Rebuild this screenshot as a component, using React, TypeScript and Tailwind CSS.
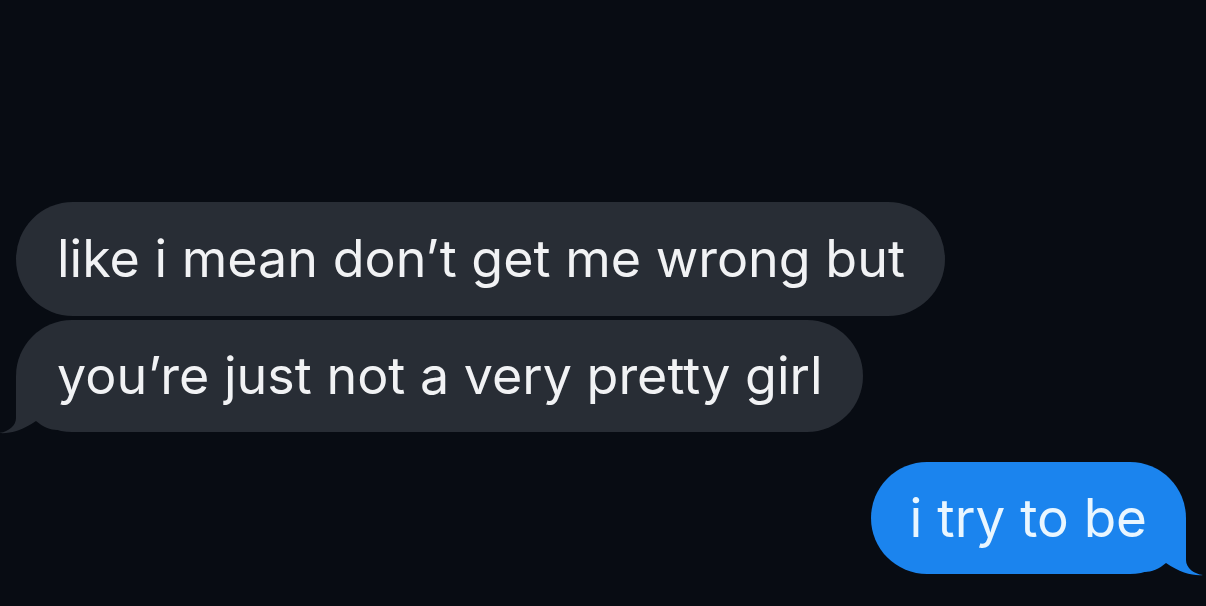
import React from 'react'

const font = { fontFamily: 'Inter, "Liberation Sans", Arial, sans-serif' }

// bubble tail, drawn relative to the bubble's bottom-right corner
function Tail({ color, side }: { color: string; side: 'left' | 'right' }) {
  const pos = side === 'right' ? '-right-[24px]' : '-left-[24px] -scale-x-100'
  return (
    <svg className={`absolute -bottom-[10px] ${pos}`} width="80" height="70" viewBox="-56 -60 80 70">
      <path
        d="M0 -56 L0 -14 C0 -6 8 0 17 1 C8 2 -6 -1 -20 -11 C-27 -5 -34 -2 -42 -2 L-42 -56 Z"
        fill={color}
      />
    </svg>
  )
}

export default function App() {
  return (
    <div className="w-[1206px] h-[606px] overflow-hidden bg-[#080c13] text-white" style={font}>
      <div className="flex flex-col pt-[202px] pl-[16px] gap-[4px]">
        <div className="self-start h-[114px] pl-[41px] pr-[40px] rounded-full bg-[#282d35] flex items-center">
          <span className="text-[52px] leading-none text-[#f1f2f4]">like i mean don’t get me wrong but</span>
        </div>
        <div className="relative self-start h-[112px] pl-[41px] pr-[40px] rounded-full bg-[#282d35] flex items-center">
          <Tail color="#282d35" side="left" />
          <span className="relative text-[52px] leading-none text-[#f1f2f4]">you’re just not a very pretty girl</span>
        </div>
      </div>
      <div className="flex justify-end pr-[20px] mt-[30px]">
        <div className="relative h-[112px] px-[39px] rounded-full bg-[#1b84ee] flex items-center">
          <Tail color="#1b84ee" side="right" />
          <span className="relative text-[53px] leading-none text-[#e9f6ff]">i try to be</span>
        </div>
      </div>
    </div>
  )
}
